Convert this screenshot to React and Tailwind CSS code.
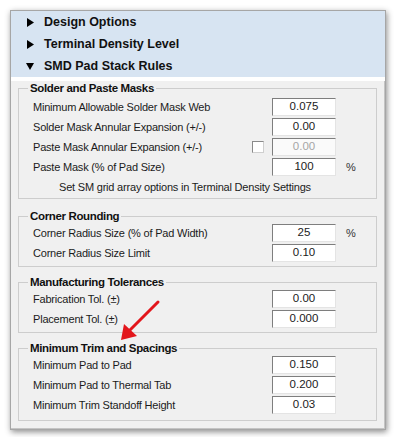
import React from "react";

const font = { fontFamily: '"Liberation Sans", Arial, sans-serif' };

// header rows of the collapsible panel
const sections = [
  { title: "Design Options", open: false },
  { title: "Terminal Density Level", open: false },
  { title: "SMD Pad Stack Rules", open: true },
];

const groups = [
  {
    title: "Solder and Paste Masks",
    box: "mt-[4px] pt-[2px] pb-[1px]",
    rows: [
      { label: "Minimum Allowable Solder Mask Web", value: "0.075" },
      { label: "Solder Mask Annular Expansion (+/-)", value: "0.00" },
      { label: "Paste Mask Annular Expansion (+/-)", value: "0.00", check: true, disabled: true },
      { label: "Paste Mask (% of Pad Size)", value: "100", unit: "%" },
    ],
    note: "Set SM grid array options in Terminal Density Settings",
  },
  {
    title: "Corner Rounding",
    box: "mt-[10px] pb-[3px]",
    rows: [
      { label: "Corner Radius Size (% of Pad Width)", value: "25", unit: "%" },
      { label: "Corner Radius Size Limit", value: "0.10" },
    ],
  },
  {
    title: "Manufacturing Tolerances",
    box: "mt-[8px] pb-[3px]",
    rows: [
      { label: "Fabrication Tol. (\u00b1)", value: "0.00" },
      { label: "Placement Tol. (\u00b1)", value: "0.000" },
    ],
  },
  {
    title: "Minimum Trim and Spacings",
    box: "mt-[8px] pb-[5px]",
    rows: [
      { label: "Minimum Pad to Pad", value: "0.150" },
      { label: "Minimum Pad to Thermal Tab", value: "0.200" },
      { label: "Minimum Trim Standoff Height", value: "0.03" },
    ],
  },
];

const Triangle = ({ open }) =>
  open ? (
    <svg width="8" height="8" viewBox="0 0 8 8">
      <polygon points="0,1 8,1 4,8" fill="#000" />
    </svg>
  ) : (
    <svg width="8" height="9" viewBox="0 0 8 9">
      <polygon points="1,0 8,4.5 1,9" fill="#000" />
    </svg>
  );

const Row = ({ row }) => (
  <div className="flex items-center h-[20px]">
    <span className="flex-1 text-[11px] tracking-[-0.2px] text-[#1b1b1b] whitespace-nowrap">
      {row.label}
    </span>
    <div className="w-[20px] flex items-center">
      {row.check && (
        <span className="block w-[12px] h-[12px] bg-white border border-t-[#8a8a8a] border-l-[#8a8a8a] border-r-[#cfcfcf] border-b-[#cfcfcf]" />
      )}
    </div>
    <div
      className={`w-[64px] h-[18px] flex items-center justify-center text-[11.5px] border border-t-[#7e7e7e] border-l-[#7e7e7e] border-r-[#e4e4e4] border-b-[#e4e4e4] ${
        row.disabled ? "bg-[#fafafa] text-[#a6a6a6]" : "bg-white text-[#1b1b1b]"
      }`}
    >
      {row.value}
    </div>
    <div className="w-[40px] pl-[10px] text-[11px] text-[#333]">{row.unit}</div>
  </div>
);

const Group = ({ group }) => (
  <fieldset className={`border border-[#cdcdcd] ${group.box}`}>
    <legend className="ml-[9px] px-[2px] leading-[14px] text-[11.5px] font-bold tracking-[-0.35px] text-[#111]">
      {group.title}
    </legend>
    <div className="pl-[14px]">
      {group.rows.map((r) => (
        <Row key={r.label} row={r} />
      ))}
      {group.note && (
        <div className="h-[20px] flex items-center pl-[26px] text-[11px] tracking-[-0.2px] text-[#1b1b1b]">
          {group.note}
        </div>
      )}
    </div>
  </fieldset>
);

export default function App() {
  return (
    <div className="w-[396px] h-[437px] bg-white pt-[10px] pl-[10px]" style={font}>
      <div className="relative w-[376px] border border-[#a6a6a6] bg-white shadow-[1px_2px_6px_rgba(0,0,0,0.45)]">
        {/* blue section headers */}
        <div className="bg-[#d7e4f2]">
          {sections.map((s) => (
            <div key={s.title} className="flex items-center h-[22px] pl-[15px]">
              <div className="w-[8px] flex justify-center">
                <Triangle open={s.open} />
              </div>
              <span className="ml-[10px] text-[12.5px] font-bold text-[#111]">{s.title}</span>
            </div>
          ))}
        </div>
        {/* settings body */}
        <div className="bg-[#f0f0f0] px-[7px] pb-[7px] border-r border-b border-[#c4c4c4]">
          {groups.map((g) => (
            <Group key={g.title} group={g} />
          ))}
        </div>
        {/* red callout arrow */}
        <svg className="absolute left-0 top-0 pointer-events-none" width="376" height="430">
          <line x1="147" y1="291" x2="118" y2="320" stroke="#e3161c" strokeWidth="3" strokeLinecap="round" />
          <polygon points="110,329 113,313 126,325" fill="#e3161c" />
        </svg>
      </div>
    </div>
  );
}
